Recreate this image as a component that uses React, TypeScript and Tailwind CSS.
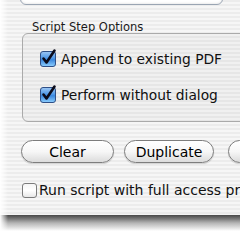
const stripes =
  "bg-[repeating-linear-gradient(180deg,#ececec_0px,#ececec_2px,#f6f6f6_2px,#f6f6f6_4px)]";

function AquaCheck({ checked }: { checked: boolean }) {
  if (!checked) {
    return (
      <svg width="15" height="15" viewBox="0 0 15 15" className="shrink-0">
        <defs>
          <linearGradient id="off" x1="0" y1="0" x2="0" y2="1">
            <stop offset="0" stopColor="#f4f4f4" />
            <stop offset="0.5" stopColor="#ffffff" />
            <stop offset="1" stopColor="#e6e6e6" />
          </linearGradient>
        </defs>
        <rect x="0.5" y="0.5" width="14" height="14" rx="2.5" fill="url(#off)" stroke="#7b7b7b" />
      </svg>
    );
  }
  return (
    <svg width="17" height="17" viewBox="0 0 17 17" className="shrink-0 overflow-visible">
      <defs>
        <linearGradient id="on" x1="0" y1="0" x2="0" y2="1">
          <stop offset="0" stopColor="#9fc8f4" />
          <stop offset="0.45" stopColor="#4e97e6" />
          <stop offset="0.55" stopColor="#3a86dc" />
          <stop offset="1" stopColor="#8ed0ff" />
        </linearGradient>
      </defs>
      <rect x="0.5" y="1.5" width="15" height="15" rx="2.5" fill="url(#on)" stroke="#2f4f86" />
      <path d="M3.5 8.5 L6.5 12.5 L14.5 0.5" fill="none" stroke="#0b0b1a" strokeWidth="2.6" strokeLinecap="round" strokeLinejoin="round" />
    </svg>
  );
}

function PillButton({ label, width }: { label: string; width: string }) {
  return (
    <button
      className={`${width} h-[23px] shrink-0 rounded-full border border-[#7d7d7d] bg-gradient-to-b from-white via-[#f7f7f7] to-[#dcdcdc] text-[14px] leading-none text-black shadow-[0_1px_1px_rgba(0,0,0,0.15)]`}
    >
      {label}
    </button>
  );
}

export default function App() {
  return (
    <div className="relative w-[240px] h-[240px] overflow-hidden bg-white font-['DejaVu_Sans',sans-serif] text-[#111]">
      <div className={`w-[300px] h-[215px] ${stripes} flex flex-col pl-[22px]`}>
        {/* bottom of the list box above */}
        <div className="-mt-[20px] ml-[-2px] w-[203px] h-[25px] shrink-0 rounded-b-[6px] border border-[#9aa5b3] bg-white shadow-[inset_0_-1px_2px_rgba(0,0,0,0.08)]" />

        <div className="pl-[10px] h-[13px] mt-[16px] text-[11.5px] leading-[13px] text-[#1a1a1a]">
          Script Step Options
        </div>

        <div className="mt-[-1px] h-[89px] w-[280px] shrink-0 rounded-[6px] border border-[#aaaaaa] bg-black/[0.025] flex flex-col pl-[17px] pt-[16px] gap-[19px]">
          <label className="flex items-center gap-[4px] h-[17px] text-[13.8px]">
            <AquaCheck checked />
            <span className="mt-[1px]">Append to existing PDF</span>
          </label>
          <label className="flex items-center gap-[4px] h-[17px] text-[13.8px]">
            <AquaCheck checked />
            <span className="mt-[1px]">Perform without dialog</span>
          </label>
        </div>

        <div className="flex mt-[18px] ml-[-1px]">
          <PillButton label="Clear" width="w-[93px]" />
          <div className="w-[10px] shrink-0" />
          <PillButton label="Duplicate" width="w-[90px]" />
          <div className="w-[14px] shrink-0" />
          <PillButton label="Delete" width="w-[90px]" />
        </div>

        <label className="flex items-center gap-[2px] mt-[17px] text-[14px] whitespace-nowrap">
          <AquaCheck checked={false} />
          <span>Run script with full access privileges</span>
        </label>
      </div>
      <div className="h-[16px] w-[300px] bg-gradient-to-b from-[#4a4a4a] via-[#b5b5b5] to-white" />
      <div className="absolute left-0 top-0 h-full w-[8px] bg-gradient-to-r from-white to-transparent" />
    </div>
  );
}
